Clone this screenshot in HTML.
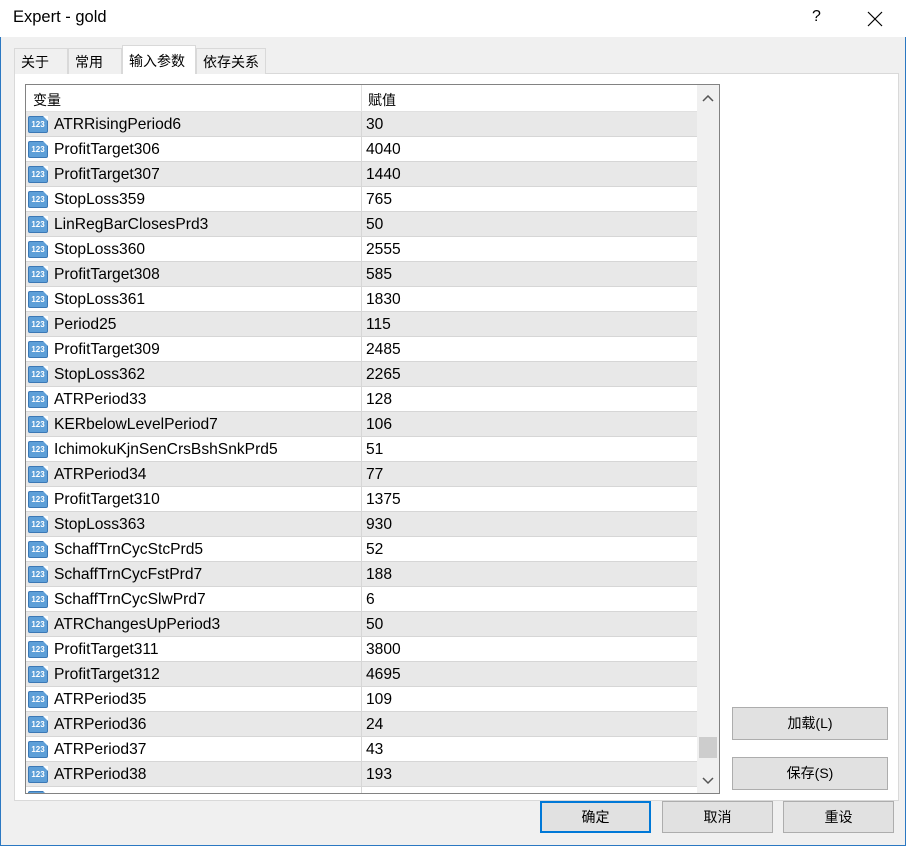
<!DOCTYPE html>
<html><head><meta charset="utf-8"><style>
*{margin:0;padding:0;box-sizing:border-box}
body{width:906px;height:846px;background:#f0f0f0;position:relative;overflow:hidden;font-family:"Liberation Sans","Noto Sans CJK SC",sans-serif;font-size:15px;color:#000}
.abs{position:absolute}
.title{left:0;top:0;width:906px;height:37px;background:#fff}
.tab{position:absolute;top:48px;height:26px;background:#f0f0f0;border:1px solid #d9d9d9;border-bottom:none;font-size:14px;padding:3px 0 0 6px}
.panel{left:14px;top:73px;width:885px;height:728px;background:#fff;border:1px solid #d9d9d9}
.list{left:25px;top:84px;width:695px;height:710px;background:#fff;border:1px solid #828282;overflow:hidden}
.row{position:absolute;left:0;width:671px;height:25px;border-bottom:1px solid #d6d6d6;font-size:15.6px}
.row.g{background:#e8e8e8}
.row .n{position:absolute;left:28px;top:4px}
.row .v{position:absolute;left:340px;top:4px}
.row .d{position:absolute;left:335px;top:0;width:1px;height:25px;background:#d6d6d6}
.ic{position:absolute;left:2px;top:4px;width:20px;height:17px;background:#5d9fd8;border-radius:2px;border:1px solid #3b78b5;color:#fff;font-size:8px;font-weight:bold;text-align:center;line-height:15px;font-family:"Liberation Sans",sans-serif}
.ic:after{content:"";position:absolute;right:-1px;top:-1px;border-top:5px solid #fff;border-left:5px solid transparent}
.sb{position:absolute;left:671px;top:0;width:22px;height:708px;background:#f0f0f0}
.btn{position:absolute;background:#e1e1e1;border:1px solid #adadad;text-align:center;font-size:14px;line-height:30px}
</style></head><body>
<div class="abs" style="left:0;top:0;width:906px;height:846px;border:1px solid #2b78c2;border-top:none"></div>
<div class="abs title"></div>
<div class="abs" style="left:13px;top:8px;font-size:16.5px">Expert - gold</div>
<div class="abs" style="left:812px;top:8px;font-size:16px">?</div>
<svg class="abs" style="left:867px;top:11px" width="16" height="16"><path d="M1 1L15 15M15 1L1 15" stroke="#000" stroke-width="1.2"/></svg>
<div class="abs panel"></div>
<div class="tab" style="left:14px;width:54px">关于</div>
<div class="tab" style="left:68px;width:54px">常用</div>
<div class="tab" style="left:122px;width:74px;top:45px;height:29px;background:#fff;padding-top:5px">输入参数</div>
<div class="tab" style="left:196px;width:70px">依存关系</div>
<div class="abs list">
<div class="abs" style="left:0;top:0;width:671px;height:27px;background:#fff;border-bottom:1px solid #e0e0e0"><span class="abs" style="left:7px;top:5px;font-size:14px">变量</span><span class="abs" style="left:335px;top:0;width:1px;height:27px;background:#e0e0e0"></span><span class="abs" style="left:342px;top:5px;font-size:14px">赋值</span></div>
<div id="rows"></div>
<div class="sb"><svg class="abs" style="left:5px;top:10px" width="12" height="8"><path d="M1 6L6 1L11 6" stroke="#555" stroke-width="1.5" fill="none"/></svg><div class="abs" style="left:2px;top:652px;width:18px;height:21px;background:#cdcdcd"></div><svg class="abs" style="left:5px;top:692px" width="12" height="8"><path d="M1 1L6 6L11 1" stroke="#555" stroke-width="1.5" fill="none"/></svg></div>
</div>
<div class="btn" style="left:732px;top:707px;width:156px;height:33px">加载(L)</div>
<div class="btn" style="left:732px;top:757px;width:156px;height:33px">保存(S)</div>
<div class="btn" style="left:540px;top:801px;width:111px;height:32px;border:2px solid #0078d7;line-height:28px">确定</div>
<div class="btn" style="left:662px;top:801px;width:111px;height:32px">取消</div>
<div class="btn" style="left:783px;top:801px;width:111px;height:32px">重设</div>
<script>
var d=[["ATRRisingPeriod6",30],["ProfitTarget306",4040],["ProfitTarget307",1440],["StopLoss359",765],["LinRegBarClosesPrd3",50],["StopLoss360",2555],["ProfitTarget308",585],["StopLoss361",1830],["Period25",115],["ProfitTarget309",2485],["StopLoss362",2265],["ATRPeriod33",128],["KERbelowLevelPeriod7",106],["IchimokuKjnSenCrsBshSnkPrd5",51],["ATRPeriod34",77],["ProfitTarget310",1375],["StopLoss363",930],["SchaffTrnCycStcPrd5",52],["SchaffTrnCycFstPrd7",188],["SchaffTrnCycSlwPrd7",6],["ATRChangesUpPeriod3",50],["ProfitTarget311",3800],["ProfitTarget312",4695],["ATRPeriod35",109],["ATRPeriod36",24],["ATRPeriod37",43],["ATRPeriod38",193],["",""]];
var h="";d.forEach(function(r,i){h+='<div class="row'+(i%2==0?' g':'')+'" style="top:'+(27+i*25)+'px"><div class="ic">123</div><span class="n">'+r[0]+'</span><span class="d"></span><span class="v">'+r[1]+'</span></div>';});
document.getElementById("rows").innerHTML=h;
</script>
</body></html>
